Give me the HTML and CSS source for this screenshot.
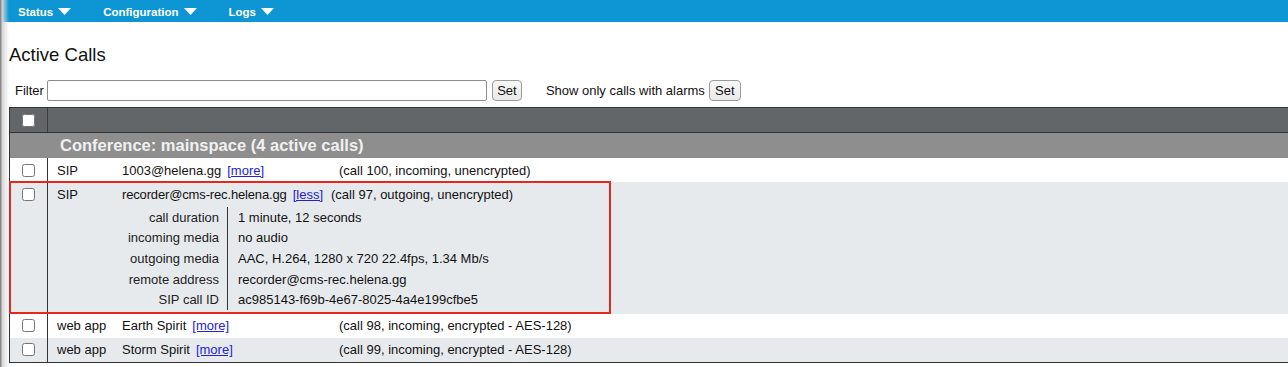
FILE: index.html
```html
<!DOCTYPE html>
<html lang="en">
<head>
<meta charset="utf-8">
<title>Active Calls</title>
<link rel="stylesheet" href="styles.css">
</head>
<body>
<nav class="topnav">
  <div class="nav-item">Status<svg class="caret" viewBox="0 0 13 7"><polygon points="0,0 13,0 6.5,7"/></svg></div>
  <div class="nav-item">Configuration<svg class="caret" viewBox="0 0 13 7"><polygon points="0,0 13,0 6.5,7"/></svg></div>
  <div class="nav-item">Logs<svg class="caret" viewBox="0 0 13 7"><polygon points="0,0 13,0 6.5,7"/></svg></div>
</nav>
<main class="page">
  <h1 class="title">Active Calls</h1>
  <div class="filters">
    <label class="filter-label" for="flt">Filter</label>
    <input id="flt" class="filter-input" type="text">
    <button class="btn">Set</button>
    <span class="alarm-label">Show only calls with alarms</span>
    <button class="btn btn-alarm">Set</button>
  </div>
  <div class="calls">
    <div class="calls-head">
      <div class="cb-cell cb-cell-head"><input type="checkbox" class="cb"></div>
      <div class="head-rest"></div>
    </div>
    <div class="conf-row">Conference: mainspace (4 active calls)</div>

    <div class="call-row">
      <div class="call-line">
        <div class="cb-cell"><input type="checkbox" class="cb"></div>
        <div class="c-type">SIP</div>
        <div class="c-name">1003@helena.gg<a class="more" href="#">[more]</a></div>
        <div class="c-info">(call 100, incoming, unencrypted)</div>
      </div>
    </div>

    <div class="call-row alt expanded">
      <div class="call-line">
        <div class="cb-cell"><input type="checkbox" class="cb"></div>
        <div class="c-type">SIP</div>
        <div class="c-name c-name-wide">recorder@cms-rec.helena.gg<a class="more" href="#">[less]</a></div>
        <div class="c-info">(call 97, outgoing, unencrypted)</div>
      </div>
      <div class="details-wrap">
        <div class="cb-cell cb-fill"></div>
        <div class="details">
          <div class="d-label">call duration</div><div class="d-value">1 minute, 12 seconds</div>
          <div class="d-label">incoming media</div><div class="d-value">no audio</div>
          <div class="d-label">outgoing media</div><div class="d-value">AAC, H.264, 1280 x 720 22.4fps, 1.34 Mb/s</div>
          <div class="d-label">remote address</div><div class="d-value">recorder@cms-rec.helena.gg</div>
          <div class="d-label">SIP call ID</div><div class="d-value">ac985143-f69b-4e67-8025-4a4e199cfbe5</div>
        </div>
      </div>
      <div class="highlight"></div>
    </div>

    <div class="call-row">
      <div class="call-line">
        <div class="cb-cell"><input type="checkbox" class="cb"></div>
        <div class="c-type">web app</div>
        <div class="c-name">Earth Spirit<a class="more" href="#">[more]</a></div>
        <div class="c-info">(call 98, incoming, encrypted - AES-128)</div>
      </div>
    </div>

    <div class="call-row alt">
      <div class="call-line">
        <div class="cb-cell"><input type="checkbox" class="cb"></div>
        <div class="c-type">web app</div>
        <div class="c-name">Storm Spirit<a class="more" href="#">[more]</a></div>
        <div class="c-info">(call 99, incoming, encrypted - AES-128)</div>
      </div>
    </div>
  </div>
  <div class="pager">1</div>
</main>
</body>
</html>
```
FILE: styles.css
```css
html, body {
  margin: 0;
  padding: 0;
  overflow: hidden;
  background: #fff;
}
body {
  font-family: "Liberation Sans", Arial, Helvetica, sans-serif;
  font-size: 13px;
  color: #111;
  position: relative;
  width: 1288px;
  height: 367px;
}
body::before {
  content: "";
  position: absolute;
  left: 0;
  top: 0;
  bottom: 0;
  width: 9px;
  background: linear-gradient(to right, #8a8a8a 0, #8a8a8a 1px, #d6d6d6 2px, rgba(255,255,255,0) 9px);
  pointer-events: none;
  z-index: 5;
}

/* top navigation */
.topnav {
  height: 22px;
  background: #0d96d3;
  display: flex;
  align-items: center;
  padding: 1px 0 0 18px;
  box-sizing: border-box;
}
.nav-item {
  color: #fff;
  font-weight: bold;
  font-size: 11.5px;
  display: flex;
  align-items: center;
  margin-right: 32px;
}
.caret {
  width: 13px;
  height: 7px;
  margin-left: 5px;
  fill: #fff;
}

/* page */
.page {
  padding-left: 9px;
}
.title {
  margin: 22px 0 0 0;
  font-size: 18.5px;
  line-height: 22px;
  font-weight: normal;
  color: #111;
}
.filters {
  display: flex;
  align-items: center;
  height: 21px;
  margin-top: 14px;
  padding-left: 6px;
}
.filter-label {
  margin-right: 3px;
}
.filter-input {
  width: 440px;
  height: 21px;
  box-sizing: border-box;
  border: 1px solid #8d8d8d;
  border-radius: 2px;
  padding: 0 3px;
  margin: 0;
  font-family: inherit;
  font-size: 13px;
}
.btn {
  height: 21px;
  width: 30px;
  box-sizing: border-box;
  margin: 0 0 0 5px;
  padding: 0;
  border: 1px solid #9a9a9a;
  border-radius: 4px;
  background: linear-gradient(#f8f8f8, #e9e9ea);
  font-family: inherit;
  font-size: 13px;
  color: #111;
}
.btn-alarm {
  width: 32px;
  margin-left: 4px;
}
.alarm-label {
  margin-left: 24px;
}

/* calls table */
.calls {
  margin-top: 6px;
  width: 1300px;
  border-left: 1px solid #333;
  border-bottom: 1px solid #333;
}
.calls-head {
  display: flex;
  height: 24px;
  background: #626669;
  border-top: 1px solid #333;
}
.cb-cell {
  width: 37px;
  flex: none;
  border-right: 1px solid #333;
  display: flex;
  align-items: center;
  justify-content: center;
  align-self: stretch;
}
.cb-cell-head {
  border-right-color: #3c3c3c;
}
.cb {
  width: 13px;
  height: 13px;
  margin: 0;
}
.head-rest {
  flex: 1;
}
.conf-row {
  height: 25px;
  line-height: 25px;
  background: #8e8e8e;
  border-top: 1px solid #333;
  color: #f0f0f0;
  font-weight: bold;
  font-size: 16.5px;
  padding-left: 50px;
}
.call-row {
  background: #fff;
  position: relative;
}
.call-row.alt {
  background: #e7eaed;
}
.call-line {
  display: flex;
  align-items: center;
  height: 24px;
}
.c-type {
  width: 65px;
  padding-left: 9px;
  flex: none;
}
.c-name {
  width: 217px;
  flex: none;
}
.c-name-wide {
  width: auto;
  padding-right: 8px;
  letter-spacing: -0.15px;
}
.more {
  color: #2222d8;
  margin-left: 6px;
  letter-spacing: 0;
}
.c-info {
  flex: 1;
}

/* expanded details */
.details-wrap {
  display: flex;
}
.cb-fill {
  display: block;
}
.details {
  margin-left: 74px;
  padding: 1px 0 4px 0;
  display: grid;
  grid-template-columns: 106px auto;
  grid-auto-rows: 20.6px;
  align-items: center;
}
.d-label {
  height: 100%;
  box-sizing: border-box;
  display: flex;
  align-items: center;
  justify-content: flex-end;
  padding-right: 8px;
  border-right: 1px solid #333;
  color: #222;
}
.d-value {
  padding-left: 10px;
  color: #111;
}
.highlight {
  position: absolute;
  left: -1px;
  top: -1px;
  width: 602px;
  height: 133px;
  box-sizing: border-box;
  border: 2px solid #e8261c;
  pointer-events: none;
}

.pager {
  margin: 2px 0 0 -8px;
  font-size: 13px;
  color: #111;
}
```
